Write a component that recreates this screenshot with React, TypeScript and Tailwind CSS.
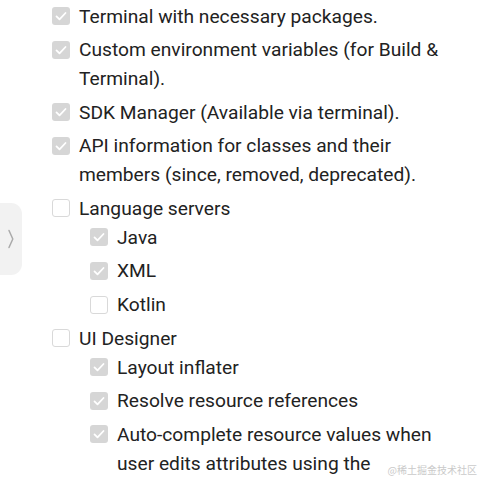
import type { ReactNode } from 'react';

type Item = {
  label: ReactNode;
  checked: boolean;
  children?: Item[];
};

const items: Item[] = [
  { label: 'Terminal with necessary packages.', checked: true },
  { label: 'Custom environment variables (for Build & Terminal).', checked: true },
  { label: 'SDK Manager (Available via terminal).', checked: true },
  {
    label: 'API information for classes and their members (since, removed, deprecated).',
    checked: true,
  },
  {
    label: 'Language servers',
    checked: false,
    children: [
      { label: 'Java', checked: true },
      { label: 'XML', checked: true },
      { label: 'Kotlin', checked: false },
    ],
  },
  {
    label: 'UI Designer',
    checked: false,
    children: [
      { label: 'Layout inflater', checked: true },
      { label: 'Resolve resource references', checked: true },
      { label: 'Auto-complete resource values when user edits attributes using the', checked: true },
    ],
  },
];

function Box({ checked }: { checked: boolean }) {
  if (checked) {
    return (
      <span className="mt-[5.5px] flex h-[18px] w-[18px] shrink-0 items-center justify-center rounded-[3px] bg-[#d6d6d6]">
        <svg viewBox="0 0 18 18" className="h-[18px] w-[18px]" fill="none">
          <path d="M4.5 9.4l3 3 6-6.4" stroke="#fff" strokeWidth="1.8" strokeLinecap="round" strokeLinejoin="round" />
        </svg>
      </span>
    );
  }
  return (
    <span className="mt-[5.5px] h-[18px] w-[18px] shrink-0 rounded-[3px] border border-[#d9d9d9] bg-white" />
  );
}

function Row({ item }: { item: Item }) {
  return (
    <li className="mt-[4.6px] first:mt-0">
      <div className="flex gap-[9px]">
        <Box checked={item.checked} />
        <span>{item.label}</span>
      </div>
      {item.children && (
        <ul className="pl-[38px]">
          {item.children.map((c, i) => (
            <Row key={i} item={c} />
          ))}
        </ul>
      )}
    </li>
  );
}

export default function App() {
  return (
    <div
      className="relative h-[480px] w-[480px] overflow-hidden bg-white text-[#222] text-[19.2px] leading-[29px]"
      style={{ fontFamily: 'Roboto, "Noto Sans", sans-serif' }}
    >
      <ul className="pl-[52px] pr-[36px] pt-[1.5px]">
        {items.map((it, i) => (
          <Row key={i} item={it} />
        ))}
      </ul>

      {/* side drawer handle */}
      <div className="absolute left-0 top-[203px] flex h-[72px] w-[22px] items-center justify-center rounded-r-[11px] bg-[#f2f2f2]">
        <svg viewBox="0 0 8 22" className="h-[22px] w-[8px]" fill="none">
          <path d="M2 2.5l3.8 8.5L2 19.5" stroke="#aaa" strokeWidth="1.5" strokeLinecap="round" strokeLinejoin="round" />
        </svg>
      </div>

      <span
        className="absolute right-[3px] top-[464px] text-[10px] leading-[12px] text-[#cacaca]"
        style={{ fontFamily: '"Noto Sans CJK SC", sans-serif' }}
      >
        @稀土掘金技术社区
      </span>
    </div>
  );
}
